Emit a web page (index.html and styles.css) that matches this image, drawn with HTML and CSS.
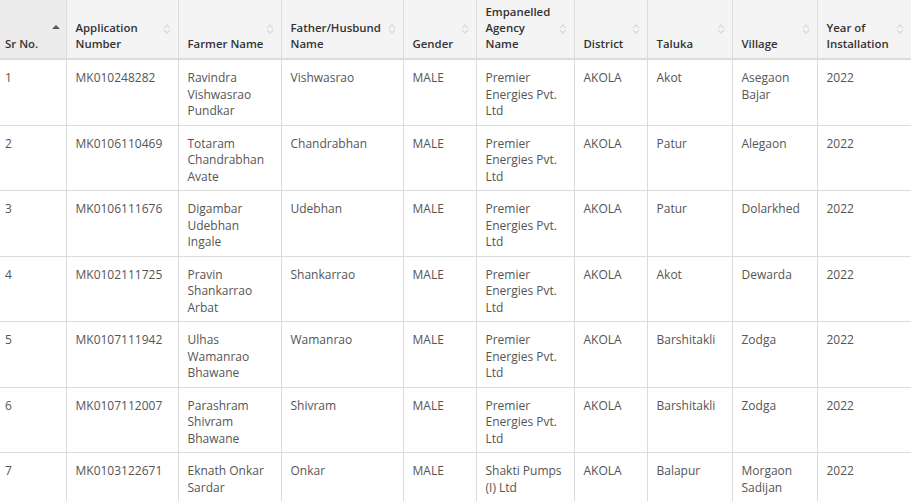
FILE: index.html
```html
<!DOCTYPE html>
<html>
<head>
<meta charset="utf-8">
<link rel="stylesheet" href="styles.css">
</head>
<body>
<div class="wrap">
<table class="grid">
<colgroup>
<col class="c1"><col class="c2"><col class="c3"><col class="c4"><col class="c5"><col class="c6"><col class="c7"><col class="c8"><col class="c9"><col class="c10">
</colgroup>
<thead>
<tr>
<th class="sorted first"><span class="lbl">Sr No.</span><svg class="sort up" viewBox="0 0 10 12" width="10" height="12"><path d="M1 8 L5 4 L9 8 Z" fill="#555"/></svg></th>
<th><span class="lbl">Application Number</span><svg class="sort" viewBox="0 0 10 14" width="10" height="14"><path d="M2 6 L5 3 L8 6 M2 8 L5 11 L8 8" fill="none" stroke="#dadada" stroke-width="1.3"/></svg></th>
<th><span class="lbl">Farmer Name</span><svg class="sort" viewBox="0 0 10 14" width="10" height="14"><path d="M2 6 L5 3 L8 6 M2 8 L5 11 L8 8" fill="none" stroke="#dadada" stroke-width="1.3"/></svg></th>
<th><span class="lbl">Father/Husbund Name</span><svg class="sort" viewBox="0 0 10 14" width="10" height="14"><path d="M2 6 L5 3 L8 6 M2 8 L5 11 L8 8" fill="none" stroke="#dadada" stroke-width="1.3"/></svg></th>
<th><span class="lbl">Gender</span><svg class="sort" viewBox="0 0 10 14" width="10" height="14"><path d="M2 6 L5 3 L8 6 M2 8 L5 11 L8 8" fill="none" stroke="#dadada" stroke-width="1.3"/></svg></th>
<th><span class="lbl">Empanelled Agency Name</span><svg class="sort" viewBox="0 0 10 14" width="10" height="14"><path d="M2 6 L5 3 L8 6 M2 8 L5 11 L8 8" fill="none" stroke="#dadada" stroke-width="1.3"/></svg></th>
<th><span class="lbl">District</span><svg class="sort" viewBox="0 0 10 14" width="10" height="14"><path d="M2 6 L5 3 L8 6 M2 8 L5 11 L8 8" fill="none" stroke="#dadada" stroke-width="1.3"/></svg></th>
<th><span class="lbl">Taluka</span><svg class="sort" viewBox="0 0 10 14" width="10" height="14"><path d="M2 6 L5 3 L8 6 M2 8 L5 11 L8 8" fill="none" stroke="#dadada" stroke-width="1.3"/></svg></th>
<th><span class="lbl">Village</span><svg class="sort" viewBox="0 0 10 14" width="10" height="14"><path d="M2 6 L5 3 L8 6 M2 8 L5 11 L8 8" fill="none" stroke="#dadada" stroke-width="1.3"/></svg></th>
<th class="last"><span class="lbl">Year of Installation</span><svg class="sort" viewBox="0 0 10 14" width="10" height="14"><path d="M2 6 L5 3 L8 6 M2 8 L5 11 L8 8" fill="none" stroke="#dadada" stroke-width="1.3"/></svg></th>
</tr>
</thead>
<tbody>
<tr><td class="first">1</td><td>MK010248282</td><td>Ravindra Vishwasrao Pundkar</td><td>Vishwasrao</td><td>MALE</td><td>Premier Energies Pvt. Ltd</td><td>AKOLA</td><td>Akot</td><td>Asegaon Bajar</td><td class="last">2022</td></tr>
<tr><td class="first">2</td><td>MK0106110469</td><td>Totaram Chandrabhan Avate</td><td>Chandrabhan</td><td>MALE</td><td>Premier Energies Pvt. Ltd</td><td>AKOLA</td><td>Patur</td><td>Alegaon</td><td class="last">2022</td></tr>
<tr><td class="first">3</td><td>MK0106111676</td><td>Digambar Udebhan Ingale</td><td>Udebhan</td><td>MALE</td><td>Premier Energies Pvt. Ltd</td><td>AKOLA</td><td>Patur</td><td>Dolarkhed</td><td class="last">2022</td></tr>
<tr><td class="first">4</td><td>MK0102111725</td><td>Pravin Shankarrao Arbat</td><td>Shankarrao</td><td>MALE</td><td>Premier Energies Pvt. Ltd</td><td>AKOLA</td><td>Akot</td><td>Dewarda</td><td class="last">2022</td></tr>
<tr><td class="first">5</td><td>MK0107111942</td><td>Ulhas Wamanrao Bhawane</td><td>Wamanrao</td><td>MALE</td><td>Premier Energies Pvt. Ltd</td><td>AKOLA</td><td>Barshitakli</td><td>Zodga</td><td class="last">2022</td></tr>
<tr><td class="first">6</td><td>MK0107112007</td><td>Parashram Shivram Bhawane</td><td>Shivram</td><td>MALE</td><td>Premier Energies Pvt. Ltd</td><td>AKOLA</td><td>Barshitakli</td><td>Zodga</td><td class="last">2022</td></tr>
<tr><td class="first">7</td><td>MK0103122671</td><td>Eknath Onkar Sardar</td><td>Onkar</td><td>MALE</td><td>Shakti Pumps (I) Ltd</td><td>AKOLA</td><td>Balapur</td><td>Morgaon Sadijan</td><td class="last">2022</td></tr>
</tbody>
</table>
</div>
</body>
</html>
```
FILE: styles.css
```css
html, body {
  margin: 0;
  padding: 0;
  background: #fff;
}
.wrap {
  width: 911px;
  height: 501px;
  overflow: hidden;
}
.grid {
  border-collapse: collapse;
  table-layout: fixed;
  width: 911px;
  font-family: "Open Sans", "Noto Sans", sans-serif;
  font-size: 12px;
  line-height: 16.5px;
}
.c1 { width: 66px; }
.c2 { width: 112px; }
.c3 { width: 103px; }
.c4 { width: 122px; }
.c5 { width: 73px; }
.c6 { width: 98px; }
.c7 { width: 73px; }
.c8 { width: 85px; }
.c9 { width: 85px; }
.c10 { width: 94px; }
.grid th {
  position: relative;
  background: #f4f4f4;
  color: #333;
  font-size: 11.4px;
  font-weight: 600;
  line-height: 16px;
  text-align: left;
  vertical-align: bottom;
  padding: 4px 17px 6px 9px;
  border-left: 1px solid #dcdcdc;
  border-right: 1px solid #dcdcdc;
  border-bottom: 2px solid #dcdcdc;
  height: 48px;
}
.grid th.sorted {
  background: #ececec;
}
.grid th.first, .grid td.first {
  border-left: none;
  padding-left: 5px;
}
.grid th.last, .grid td.last {
  border-right: none;
}
.sort {
  position: absolute;
  right: 6px;
  top: 22px;
}
.sort.up {
  right: 5px;
  top: 21px;
}
.grid td {
  color: #555;
  vertical-align: top;
  padding: 10px 8px 5px 9px;
  border: 1px solid #dcdcdc;
  border-top: none;
  height: 49.5px;
}
```
